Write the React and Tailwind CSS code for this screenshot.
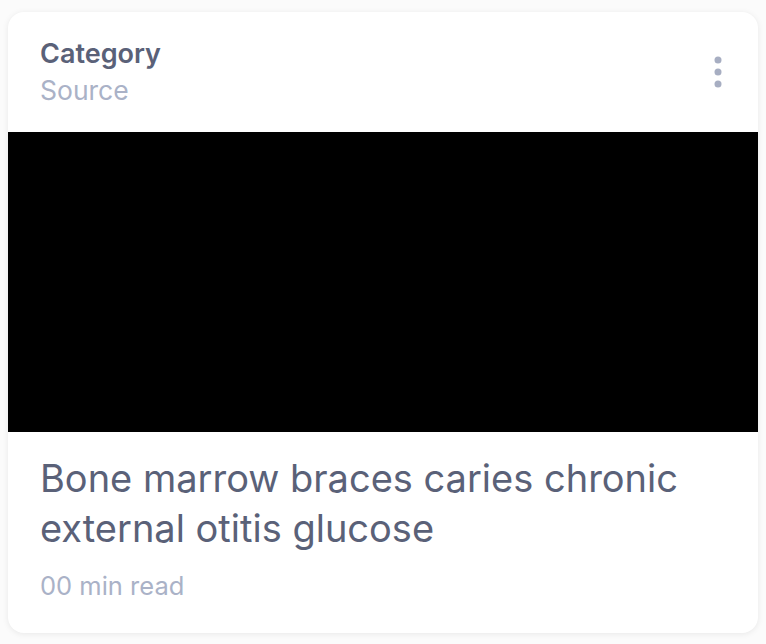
import React from 'react';

const MoreIcon = () => (
  <svg width="8" height="32" viewBox="0 0 8 32" fill="#a7aec2">
    <circle cx="4" cy="4" r="3.5" />
    <circle cx="4" cy="16" r="3.5" />
    <circle cx="4" cy="28" r="3.5" />
  </svg>
);

export default function App() {
  return (
    <div className="min-h-[644px] w-full bg-[#fbfbfb] p-2 pt-3 font-['Inter',sans-serif]">
      <div className="w-[750px] overflow-hidden rounded-2xl bg-white shadow-[0_1px_6px_rgba(0,0,0,0.08)]">
        {/* Header */}
        <div className="flex items-start justify-between px-8 py-6">
          <div>
            <div className="text-[27px] font-semibold leading-[36px] text-[#5a6178]">Category</div>
            <div className="text-[26.5px] leading-[36px] text-[#aab2c7]">Source</div>
          </div>
          <button className="mr-[4px] mt-[20px]" aria-label="More">
            <MoreIcon />
          </button>
        </div>

        {/* Media */}
        <div className="h-[300px] w-full bg-black" />

        {/* Body */}
        <div className="px-8 pb-[31px] pt-[21px]">
          <h2 className="text-[38px] leading-[50px] text-[#5a6178]">
            Bone marrow braces caries chronic external otitis glucose
          </h2>
          <p className="mt-[17px] text-[25.5px] leading-[32px] text-[#aab2c7]">00 min read</p>
        </div>
      </div>
    </div>
  );
}
